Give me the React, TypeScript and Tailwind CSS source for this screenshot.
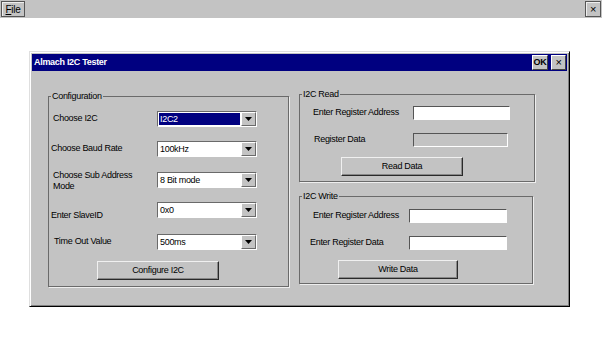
import React from "react";

const font = "font-['Liberation_Sans',Arial,sans-serif] text-[9px] tracking-[-0.3px] text-black";

function Arrow() {
  return (
    <svg width="7" height="4" viewBox="0 0 7 4">
      <path d="M0 0h7L3.5 4z" fill="#000" />
    </svg>
  );
}

function Combo({ value, selected }: { value: string; selected?: boolean }) {
  return (
    <div className="flex w-[100px] h-[16px] border border-t-[#6a6a6a] border-l-[#6a6a6a] border-b-white border-r-white bg-white">
      <div className="flex-1 flex items-center pl-[1px] pr-[1px] py-[1px]">
        <span className={selected ? "w-full h-full bg-[#000080] text-white pl-[1px] leading-[12px]" : "pl-[1px] leading-[12px]"}>
          {value}
        </span>
      </div>
      <div className="w-[15px] h-full flex items-center justify-center bg-[#c3c3c3] border border-t-white border-l-white border-b-[#6a6a6a] border-r-[#6a6a6a]">
        <Arrow />
      </div>
    </div>
  );
}

function Button({ label, w }: { label: string; w: string }) {
  return (
    <div className={`${w} h-[19px] flex items-center justify-center bg-[#c3c3c3] border border-t-[#f0f0f0] border-l-[#f0f0f0] border-b-[#2a2a2a] border-r-[#2a2a2a] shadow-[inset_-1px_-1px_0_#888]`}>
      {label}
    </div>
  );
}

function Input({ w, disabled }: { w: string; disabled?: boolean }) {
  return (
    <div className={`${w} h-[14px] border border-t-[#555] border-l-[#555] border-b-white border-r-white ${disabled ? "bg-[#c3c3c3]" : "bg-white"}`} />
  );
}

function Group({ title, className, children }: { title: string; className: string; children: React.ReactNode }) {
  return (
    <div className={`relative border border-[#6a6a6a] shadow-[1px_1px_0_#eee] ${className}`}>
      <span className="absolute -top-[7px] left-[2px] bg-[#c3c3c3] px-[1px] leading-[12px]">{title}</span>
      {children}
    </div>
  );
}

export default function App() {
  return (
    <div className={`w-[602px] h-[361px] bg-white overflow-hidden ${font}`}>
      <div className="h-[18px] bg-[#c3c3c3] flex items-center justify-between px-[1px]">
        <div className="w-[24px] h-[16px] border border-[#555] shadow-[inset_1px_1px_0_#eee] flex items-center justify-center text-[10px]">
          <span><span className="underline">F</span>ile</span>
        </div>
        <div className="w-[16px] h-[16px] border border-[#555] shadow-[inset_1px_1px_0_#eee] flex items-center justify-center text-[11px]">
          ×
        </div>
      </div>

      <div className="ml-[29px] mt-[33px] w-[541px] h-[256px] bg-[#c3c3c3] border border-t-[#dfdfdf] border-l-[#dfdfdf] border-b-black border-r-black shadow-[inset_1px_1px_0_#fff,inset_-1px_-1px_0_#808080] p-[2px] flex flex-col">
        <div className="h-[17px] bg-[#000080] flex items-center justify-between pl-[2px] pr-[1px]">
          <span className="text-white font-bold text-[9px]">Almach I2C Tester</span>
          <div className="flex gap-[3px]">
            <div className="w-[16px] h-[15px] bg-[#c3c3c3] border border-t-white border-l-white border-b-[#444] border-r-[#444] flex items-center justify-center font-bold text-[9px]">
              OK
            </div>
            <div className="w-[15px] h-[15px] bg-[#c3c3c3] border border-t-white border-l-white border-b-[#444] border-r-[#444] flex items-center justify-center text-[11px]">
              ×
            </div>
          </div>
        </div>

        <div className="flex items-start pl-[16px] pt-[25px] gap-[10px]">
          <Group title="Configuration" className="w-[241px] h-[191px] pt-[14px] pl-[4px]">
            <div className="flex items-center h-[16px]">
              <span className="w-[104px]">Choose I2C</span>
              <Combo value="I2C2" selected />
            </div>
            <div className="flex items-center h-[16px] mt-[14px] -ml-[2px]">
              <span className="w-[106px]">Choose Baud Rate</span>
              <Combo value="100kHz" />
            </div>
            <div className="flex items-center h-[16px] mt-[15px]">
              <span className="w-[104px] leading-[11px] pt-[2px]">
                Choose Sub Address
                <br />
                Mode
              </span>
              <Combo value="8 Bit mode" />
            </div>
            <div className="flex items-start h-[16px] mt-[14px] -ml-[2px]">
              <span className="w-[106px] pt-[7px]">Enter SlaveID</span>
              <Combo value="0x0" />
            </div>
            <div className="flex items-center h-[16px] mt-[16px] ml-[1px]">
              <span className="w-[103px]">Time Out Value</span>
              <Combo value="500ms" />
            </div>
            <div className="mt-[11px] ml-[44px]">
              <Button label="Configure I2C" w="w-[122px]" />
            </div>
          </Group>

          <div className="flex flex-col gap-[14px] -mt-[2px]">
            <Group title="I2C Read" className="w-[236px] h-[88px] pt-[11px] pl-[13px]">
              <div className="flex items-center h-[14px]">
                <span className="w-[100px]">Enter Register Address</span>
                <Input w="w-[97px]" />
              </div>
              <div className="flex items-center h-[14px] mt-[13px]">
                <span className="w-[100px] pl-[1px]">Register Data</span>
                <Input w="w-[95px]" disabled />
              </div>
              <div className="mt-[10px] ml-[28px]">
                <Button label="Read Data" w="w-[122px]" />
              </div>
            </Group>

            <Group title="I2C Write" className="w-[234px] h-[88px] pt-[12px] pl-[13px]">
              <div className="flex items-center h-[14px]">
                <span className="w-[96px]">Enter Register Address</span>
                <Input w="w-[98px]" />
              </div>
              <div className="flex items-center h-[14px] mt-[13px] -ml-[3px]">
                <span className="w-[99px]">Enter Register Data</span>
                <Input w="w-[98px]" />
              </div>
              <div className="mt-[10px] ml-[25px]">
                <Button label="Write Data" w="w-[120px]" />
              </div>
            </Group>
          </div>
        </div>
      </div>
    </div>
  );
}
